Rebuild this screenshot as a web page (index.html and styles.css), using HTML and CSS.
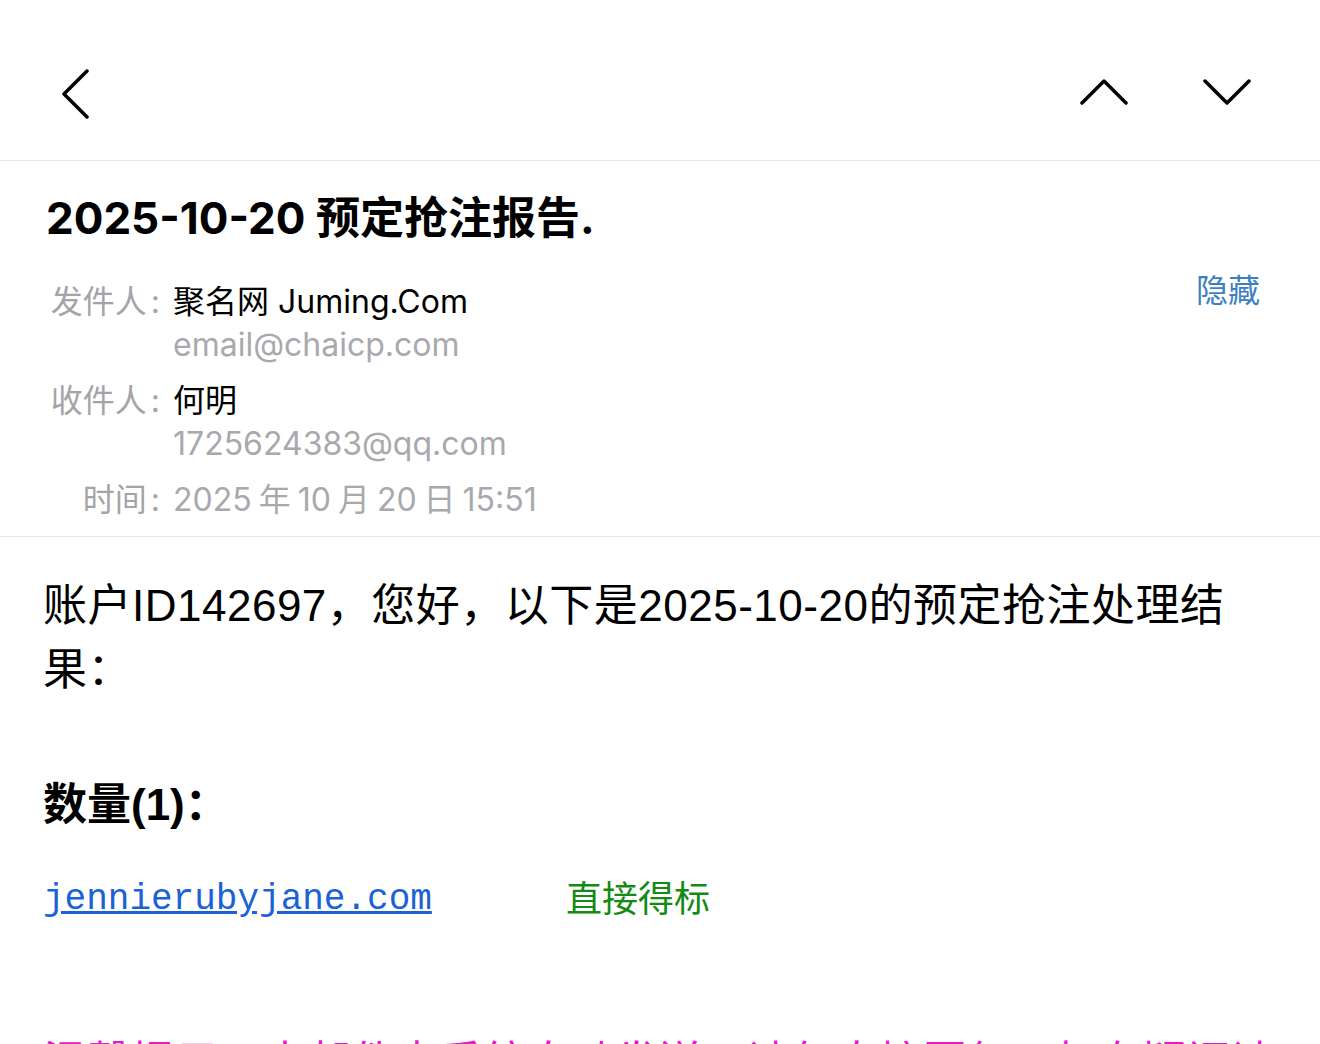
FILE: index.html
```html
<!DOCTYPE html>
<html lang="zh-CN">
<head>
    <meta charset="UTF-8">
    <meta name="viewport" content="width=device-width, initial-scale=1.0">
    <title>2025-10-20预定抢注报告</title>
    <link rel="stylesheet" href="styles.css">
</head>
<body>

    <header class="topbar">
        <button class="icon-btn back" aria-label="返回">
            <svg width="28" height="50" viewBox="0 0 28 50"><path d="M26 2 L3 25 L26 48" /></svg>
        </button>
        <div class="nav-arrows">
            <button class="icon-btn" aria-label="上一封">
                <svg width="48" height="26" viewBox="0 0 48 26"><path d="M2 24 L24 2 L46 24" /></svg>
            </button>
            <button class="icon-btn" aria-label="下一封">
                <svg width="48" height="26" viewBox="0 0 48 26"><path d="M2 2 L24 24 L46 2" /></svg>
            </button>
        </div>
    </header>

    <section class="mail-head">
        <h1 class="subject">2025-10-20 预定抢注报告.</h1>

        <div class="meta">
            <div class="meta-grid">
                <span class="label">发件人 :</span>
                <div class="value">
                    <div class="name">聚名网 Juming.Com</div>
                    <div class="addr">email@chaicp.com</div>
                </div>

                <span class="label">收件人 :</span>
                <div class="value">
                    <div class="name">何明</div>
                    <div class="addr">1725624383@qq.com</div>
                </div>

                <span class="label">时间 :</span>
                <div class="value">
                    <div class="addr time">2025 年 10 月 20 日 15:51</div>
                </div>
            </div>
            <a class="hide-link" href="#">隐藏</a>
        </div>
    </section>

    <main class="mail-body">
        <p class="greeting">账户ID142697，您好，以下是2025-10-20的预定抢注处理结果：</p>

        <h3 class="count">数量(1)：</h3>

        <div class="result-row">
            <a class="domain" href="#">jennierubyjane.com</a>
            <span class="status">直接得标</span>
        </div>

        <p class="notice">温馨提示：本邮件由系统自动发送，请勿直接回复，如有疑问请联系聚名网客服处理。</p>
    </main>

</body>
</html>
```

FILE: styles.css
```css
body {
    margin: 0;
    background: #fff;
    color: #000;
    font-family: Inter, "Noto Sans CJK SC", sans-serif;
    overflow: hidden;
}

/* top navigation */
.topbar {
    height: 160px;
    display: flex;
    justify-content: space-between;
    align-items: center;
    padding: 0 69px 0 61px;
    border-bottom: 1px solid #e6e6e6;
}

.icon-btn {
    background: none;
    border: none;
    padding: 0;
    display: block;
    cursor: pointer;
}

.icon-btn svg {
    display: block;
}

.icon-btn path {
    fill: none;
    stroke: #000;
    stroke-width: 3.5;
    stroke-linecap: round;
    stroke-linejoin: round;
}

.back {
    margin-top: 28px;
}

.nav-arrows {
    display: flex;
    gap: 75px;
    margin-top: 24px;
}

/* subject + meta */
.mail-head {
    padding: 0 60px 15px 43px;
    border-bottom: 1px solid #e6e6e6;
}

.subject {
    margin: 0;
    padding: 31px 0 0 3px;
    font-size: 44px;
    line-height: 52px;
    font-weight: 700;
}

.meta {
    display: flex;
    justify-content: space-between;
    align-items: flex-start;
    margin-top: 36px;
}

.meta-grid {
    display: grid;
    grid-template-columns: 117px auto;
    column-gap: 13px;
    row-gap: 13px;
    font-size: 32px;
    line-height: 43px;
}

.label {
    color: #a4a4a8;
    text-align: right;
    white-space: nowrap;
    word-spacing: -5px;
}

.name {
    color: #000;
}

.addr {
    color: #a9a9ad;
}

.time {
    word-spacing: -2px;
}

.hide-link {
    color: #3d7fc2;
    text-decoration: none;
    font-size: 32px;
    line-height: 43px;
    margin-top: -11px;
}

/* body */
.mail-body {
    padding: 37px 43px 0;
    font-family: "Liberation Sans", "Noto Sans CJK SC", sans-serif;
}

.greeting {
    margin: 0;
    max-width: 1205px;
    font-size: 44px;
    line-height: 64px;
    letter-spacing: 0.5px;
}

.count {
    margin: 71px 0 0;
    font-size: 44px;
    line-height: 64px;
    font-weight: 700;
}

.result-row {
    display: flex;
    align-items: center;
    margin-top: 39px;
    font-size: 36px;
    line-height: 48px;
}

.domain {
    width: 523px;
    color: #1a62d6;
    font-family: "Liberation Mono", monospace;
    text-decoration: underline;
}

.status {
    color: #138a13;
}

.notice {
    margin: 107px 0 0;
    color: #e01ec4;
    font-size: 44px;
    line-height: 64px;
}
```
